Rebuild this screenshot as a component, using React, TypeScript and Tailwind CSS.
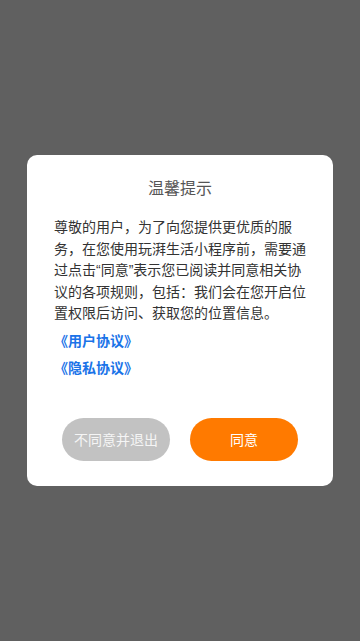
import React from 'react';

const font = { fontFamily: '"Noto Sans CJK SC", "Noto Sans", sans-serif' };

const App: React.FC = () => {
    return (
        <div className="w-[360px] h-[641px] bg-[#606060] flex items-center justify-center" style={font}>
            <div className="w-[306px] bg-white rounded-[10px] px-[27px] pt-[20px] pb-[25px]">
                <h1 className="text-center text-[16px] leading-[24px] text-[#555555]">温馨提示</h1>
                <p className="mt-[18px] text-[14px] leading-[21.6px] text-[#333333] font-['Liberation_Sans','Noto_Sans_CJK_SC',sans-serif]">
                    尊敬的用户，为了向您提供更优质的服务，在您使用玩湃生活小程序前，需要通过点击“同意”表示您已阅读并同意相关协议的各项规则，包括：我们会在您开启位置权限后访问、获取您的位置信息。
                </p>
                <div className="mt-[2px] flex flex-col">
                    <span className="text-[14px] leading-[27px] font-semibold text-[#1a73e8]">《用户协议》</span>
                    <span className="text-[14px] leading-[27px] font-semibold text-[#1a73e8]">《隐私协议》</span>
                </div>
                <div className="mt-[37px] flex justify-center gap-[20px]">
                    <button className="w-[108px] h-[43px] rounded-full bg-[#c2c2c2] text-[14px] text-[#f5f5f5]">不同意并退出</button>
                    <button className="w-[108px] h-[43px] rounded-full bg-[#ff7a00] text-[14px] text-white">同意</button>
                </div>
            </div>
        </div>
    );
};

export default App;
